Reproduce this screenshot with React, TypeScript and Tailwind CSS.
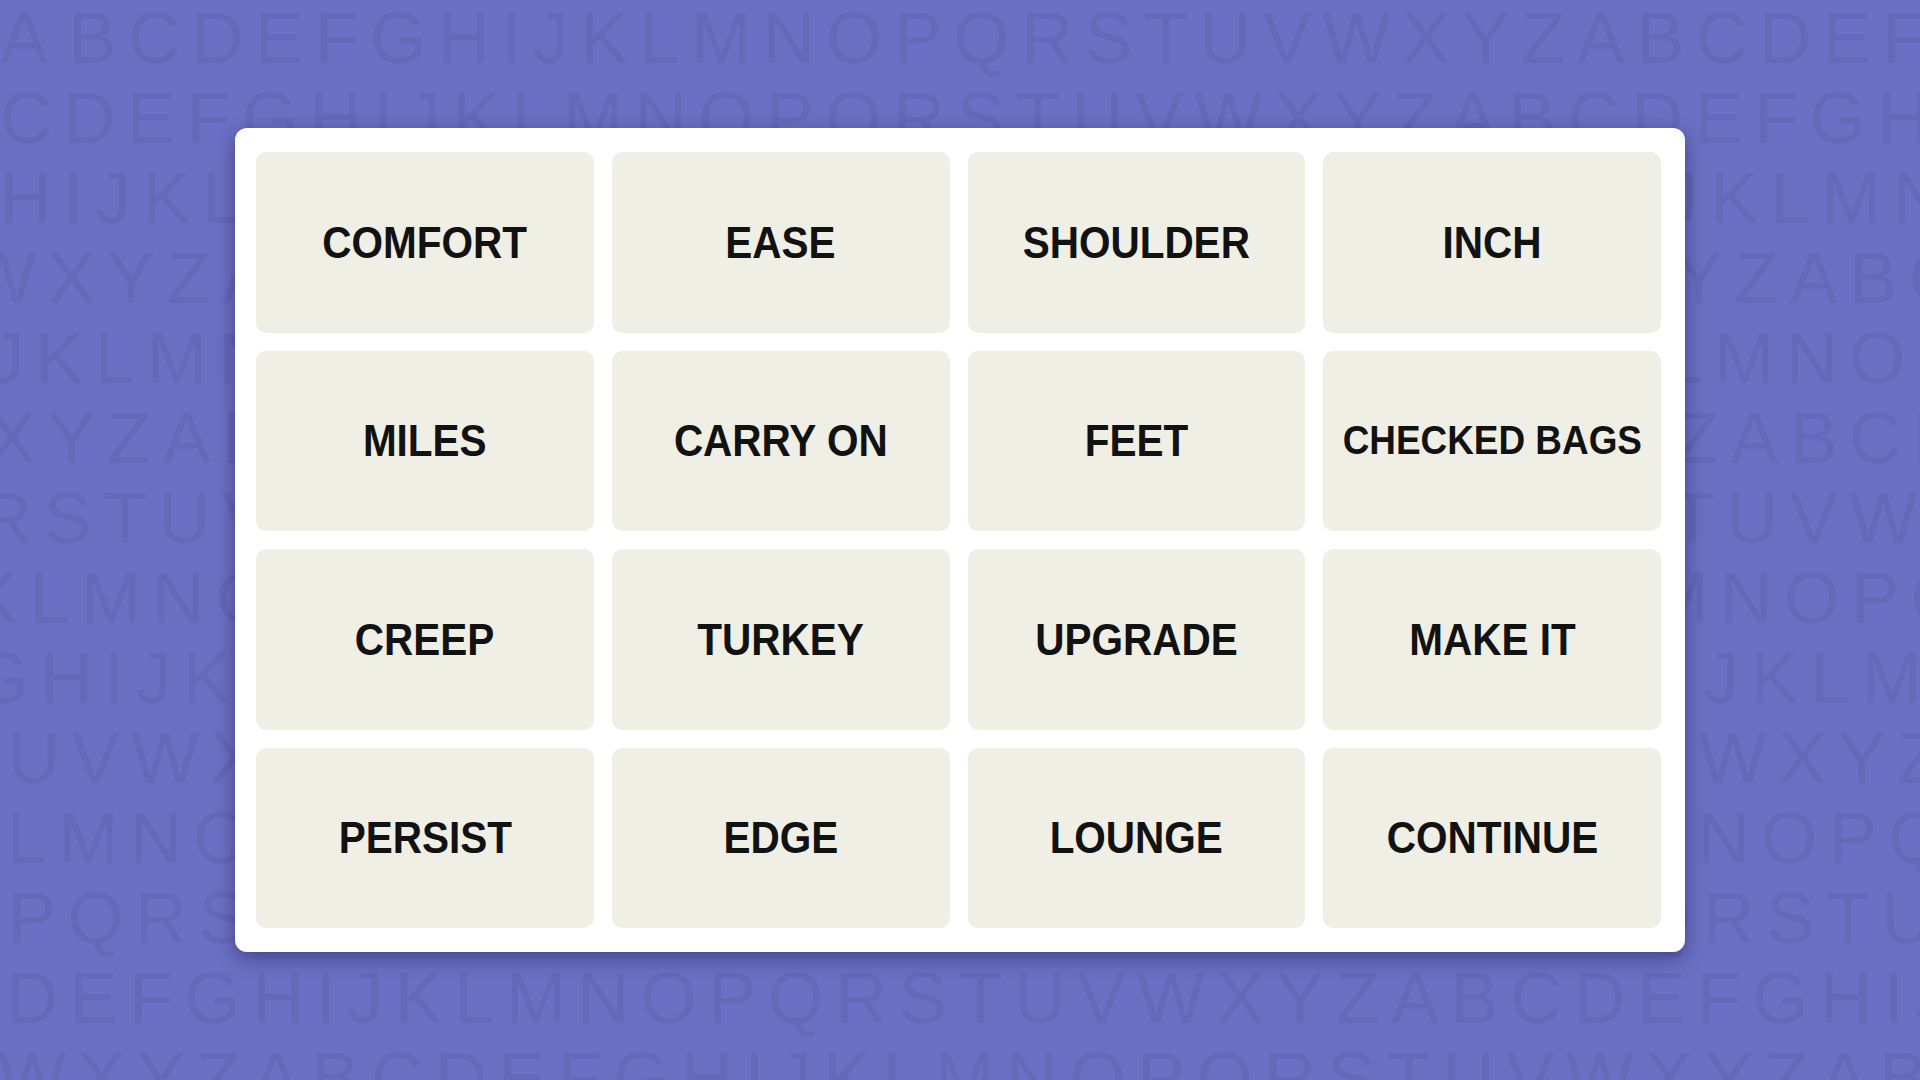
import React from "react";

const ALPHABET = "ABCDEFGHIJKLMNOPQRSTUVWXYZ";

// each background row runs through the alphabet from its own letter, nudged sideways
const rows = [
  { start: "A", shift: "ml-0", lead: "mr-[9px]" },
  { start: "C", shift: "ml-0" },
  { start: "H", shift: "ml-0" },
  { start: "W", shift: "-ml-[32px]" },
  { start: "J", shift: "-ml-[12px]" },
  { start: "X", shift: "-ml-[12px]" },
  { start: "R", shift: "-ml-[20px]" },
  { start: "K", shift: "-ml-[30px]" },
  { start: "G", shift: "-ml-[27px]" },
  { start: "U", shift: "ml-[8px]" },
  { start: "L", shift: "ml-[7px]" },
  { start: "P", shift: "ml-[8px]" },
  { start: "D", shift: "ml-[6px]" },
  { start: "W", shift: "-ml-[2px]" },
];

const lettersFrom = (start: string, count = 36) => {
  const first = ALPHABET.indexOf(start);
  let out = "";
  for (let i = 0; i < count; i++) out += ALPHABET[(first + i) % 26];
  return out;
};

const words = [
  "COMFORT",
  "EASE",
  "SHOULDER",
  "INCH",
  "MILES",
  "CARRY ON",
  "FEET",
  "CHECKED BAGS",
  "CREEP",
  "TURKEY",
  "UPGRADE",
  "MAKE IT",
  "PERSIST",
  "EDGE",
  "LOUNGE",
  "CONTINUE",
];

const LetterWall = () => (
  <div className="absolute inset-0 overflow-hidden -mt-[2px] select-none">
    {rows.map((row, i) => {
      const text = lettersFrom(row.start);
      return (
        <div
          key={i}
          className={`whitespace-nowrap text-[72px] leading-[80px] tracking-[0.16em] text-[#6469ba] ${row.shift}`}
          style={{ fontFamily: '"Liberation Sans", Arial, sans-serif' }}
        >
          {row.lead ? (
            <>
              <span className={row.lead}>{text[0]}</span>
              {text.slice(1)}
            </>
          ) : (
            text
          )}
        </div>
      );
    })}
  </div>
);

const Tile = ({ word }: { word: string }) => {
  const long = word.length > 10;
  return (
    <button className="flex items-center justify-center rounded-[10px] bg-[#efefe6]">
      <span
        className={`scale-x-90 font-bold text-[#121212] whitespace-nowrap ${
          long ? "text-[41px]" : "text-[45px]"
        }`}
        style={{ fontFamily: '"Liberation Sans", Arial, sans-serif' }}
      >
        {word}
      </span>
    </button>
  );
};

const App = () => {
  return (
    <div className="relative w-[1920px] h-[1080px] overflow-hidden bg-[#6b70c4] flex items-center justify-center">
      <LetterWall />
      <div className="relative w-[1450px] h-[824px] rounded-xl bg-white pl-[21px] pr-6 py-6 shadow-[0_6px_20px_rgba(10,10,50,0.42)]">
        <div className="grid h-full grid-cols-4 grid-rows-4 gap-[18px]">
          {words.map((word) => (
            <Tile key={word} word={word} />
          ))}
        </div>
      </div>
    </div>
  );
};

export default App;
